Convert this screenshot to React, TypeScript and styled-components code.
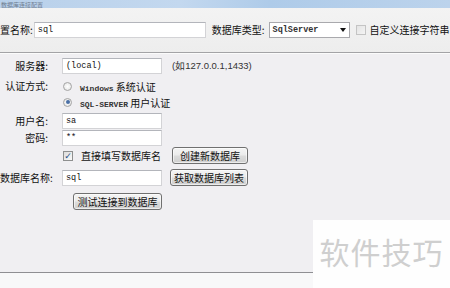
import React from "react";
import styled, { createGlobalStyle } from "styled-components";

const Global = createGlobalStyle`
  html, body { margin: 0; padding: 0; }
  body {
    width: 450px; height: 288px; overflow: hidden;
    font-family: "Noto Sans CJK SC", "Liberation Sans", sans-serif;
    font-size: 10px; color: #111;
    background: #f0eff2;
  }
`;

const Window = styled.div`
  position: relative;
  width: 450px; height: 288px;
  display: flex; flex-direction: column;
  overflow: hidden;
`;

const TitleBar = styled.div`
  height: 8px; flex: none; overflow: hidden;
  background: linear-gradient(90deg, #b8d0ea 0%, #c3d8ef 40%, #aecbe9 60%, #bcd3ec 100%);
  display: flex; align-items: center;
`;

const TitleText = styled.span`
  font-size: 6px; line-height: 7px; color: #3a4452;
  white-space: nowrap; opacity: 0.6; margin-left: 1px;
`;

const TopPanel = styled.div`
  height: 44px; flex: none;
  background: linear-gradient(#f3f3f3, #ededed);
  display: flex; align-items: center;
  border-bottom: 1px solid #a3a3a6;
  box-shadow: 0 1px 0 #fbfbfb;
  white-space: nowrap;
`;

const TopLabel = styled.span<{ $ml?: number }>`
  margin-left: ${(p) => p.$ml ?? 0}px;
  font-size: 10px; line-height: 16px;
`;

const TextBox = styled.div<{ $w: number; $ml?: number }>`
  margin-left: ${(p) => p.$ml ?? 0}px;
  width: ${(p) => p.$w}px; height: 16px; box-sizing: border-box;
  background: #fff;
  border: 1px solid #d3d3d6; border-top-color: #b3b5bb;
  font-family: "Liberation Mono", monospace; font-size: 8.5px;
  line-height: 14px; padding-left: 3px; color: #111;
  overflow: hidden; white-space: nowrap;
`;

const Select = styled.div`
  margin-left: 4px;
  width: 81px; height: 16px; box-sizing: border-box;
  background: #fff; border: 1px solid #a9a9ad;
  display: flex; align-items: center;
  font-family: "Liberation Mono", monospace; font-size: 8.5px; font-weight: bold;
  color: #333; padding-left: 3px;
`;

const SelectValue = styled.span`flex: 1;`;

const SelectArrow = styled.span`
  width: 12px; height: 14px; display: flex; align-items: center; justify-content: center;
  &::after {
    content: ""; border-left: 3px solid transparent; border-right: 3px solid transparent;
    border-top: 4px solid #111;
  }
`;

const Check = styled.span<{ $on?: boolean; $dim?: boolean; $ml?: number }>`
  margin-left: ${(p) => p.$ml ?? 0}px;
  width: 10px; height: 10px; box-sizing: border-box; flex: none;
  border: 1px solid ${(p) => (p.$dim ? "#c4c4c4" : "#8e8f8f")};
  background: ${(p) => (p.$dim ? "linear-gradient(135deg,#e4e4e4,#f4f4f4)" : "linear-gradient(135deg,#dcdcdc,#fafafa)")};
  display: inline-flex; align-items: center; justify-content: center;
  color: #2a4f86; font-size: 9px; line-height: 8px; font-family: "DejaVu Sans", sans-serif;
`;

const Radio = styled.span<{ $on?: boolean }>`
  width: 9px; height: 9px; border-radius: 50%; box-sizing: border-box; flex: none;
  border: 1px solid #a4a4a4;
  background: radial-gradient(circle, #ffffff 0%, #e0e0e0 100%);
  display: inline-flex; align-items: center; justify-content: center;
  &::after {
    content: ""; width: 4px; height: 4px; border-radius: 50%;
    background: ${(p) => (p.$on ? "#4a6fa6" : "transparent")};
  }
`;

const Body = styled.div`
  flex: 1; position: relative;
  display: flex; flex-direction: column;
  padding-top: 5px;
  border-bottom: 1px solid #8f8f93;
`;

const Footer = styled.div`
  height: 15px; flex: none; background: #f8f8f9;
`;

const Row = styled.div<{ $mt?: number; $h?: number }>`
  display: grid;
  grid-template-columns: 48px 100px auto;
  column-gap: 14px;
  align-items: center;
  margin-top: ${(p) => p.$mt ?? 0}px;
  height: ${(p) => p.$h ?? 16}px;
  & > :nth-child(3) { margin-left: -6px; }
`;

const Label = styled.span`
  grid-column: 1; text-align: right; white-space: nowrap;
  font-size: 10px; line-height: 16px;
`;

const Hint = styled.span<{ $x?: number }>`
  margin-left: ${(p) => p.$x ?? 0}px !important;
  font-family: "Liberation Sans", sans-serif; font-size: 9.5px; color: #333;
  white-space: nowrap;
`;

const Option = styled.label<{ $span?: boolean }>`
  grid-column: ${(p) => (p.$span ? "2 / 4" : "2")};
  display: flex; align-items: center; gap: 8px; padding-left: 1px;
  white-space: nowrap; font-size: 10px;
`;

const OptEn = styled.span`
  font-family: "Liberation Mono", monospace; font-size: 8px; font-weight: bold; color: #333;
`;

const Button = styled.button<{ $w: number; $x?: number; $col?: number; $end?: boolean }>`
  grid-column: ${(p) => p.$col ?? 3};
  justify-self: ${(p) => (p.$end ? "end" : "start")};
  margin-left: ${(p) => p.$x ?? 0}px !important;
  width: ${(p) => p.$w}px; height: 17px; box-sizing: border-box;
  padding: 0; border: 1px solid #707070; border-radius: 3px;
  background: linear-gradient(#f4f4f4 0%, #ebebeb 48%, #dcdcdc 52%, #cfcfcf 100%);
  box-shadow: inset 0 0 0 1px rgba(255,255,255,0.6);
  font-family: "Noto Sans CJK SC", sans-serif; font-size: 10px; line-height: 14px; color: #111;
  white-space: nowrap;
`;

const Watermark = styled.div`
  position: absolute; left: 313px; top: 220px; width: 137px; height: 68px;
  background: #fefefe;
  display: flex; align-items: flex-start; justify-content: center;
  padding-top: 16px; box-sizing: border-box;
  font-family: "Noto Sans CJK SC", sans-serif; font-size: 30px; line-height: 30px;
  letter-spacing: 1px;
  color: #cfcfcf;
`;

export default function App() {
  return (
    <>
      <Global />
      <Window>
        <TitleBar>
          <TitleText>数据库连接配置</TitleText>
        </TitleBar>
        <TopPanel>
          <TopLabel>置名称:</TopLabel>
          <TextBox $w={172} $ml={1}>sql</TextBox>
          <TopLabel $ml={6}>数据库类型:</TopLabel>
          <Select>
            <SelectValue>SqlServer</SelectValue>
            <SelectArrow />
          </Select>
          <Check $dim $ml={6} />
          <TopLabel $ml={4}>自定义连接字符串</TopLabel>
        </TopPanel>
        <Body>
          <Row $mt={0}>
            <Label>服务器:</Label>
            <TextBox $w={100}>(local)</TextBox>
            <Hint $x={-4}>(如127.0.0.1,1433)</Hint>
          </Row>
          <Row $mt={4}>
            <Label>认证方式:</Label>
            <Option $span>
              <Radio />
              <span><OptEn>Windows</OptEn> 系统认证</span>
            </Option>
          </Row>
          <Row>
            <Option $span>
              <Radio $on />
              <span><OptEn>SQL-SERVER</OptEn> 用户认证</span>
            </Option>
          </Row>
          <Row $mt={3}>
            <Label>用户名:</Label>
            <TextBox $w={100}>sa</TextBox>
          </Row>
          <Row $mt={1}>
            <Label>密码:</Label>
            <TextBox $w={100}>**</TextBox>
          </Row>
          <Row $mt={1} $h={17}>
            <Option>
              <Check $on>✓</Check>
              <span>直接填写数据库名</span>
            </Option>
            <Button $w={76} $x={-4}>创建新数据库</Button>
          </Row>
          <Row $mt={5} $h={17}>
            <Label>数据库名称:</Label>
            <TextBox $w={100}>sql</TextBox>
            <Button $w={78} $x={-6}>获取数据库列表</Button>
          </Row>
          <Row $mt={7} $h={17}>
            <Button $w={89} $col={2} $end>测试连接到数据库</Button>
          </Row>
        </Body>
        <Footer />
        <Watermark>软件技巧</Watermark>
      </Window>
    </>
  );
}
